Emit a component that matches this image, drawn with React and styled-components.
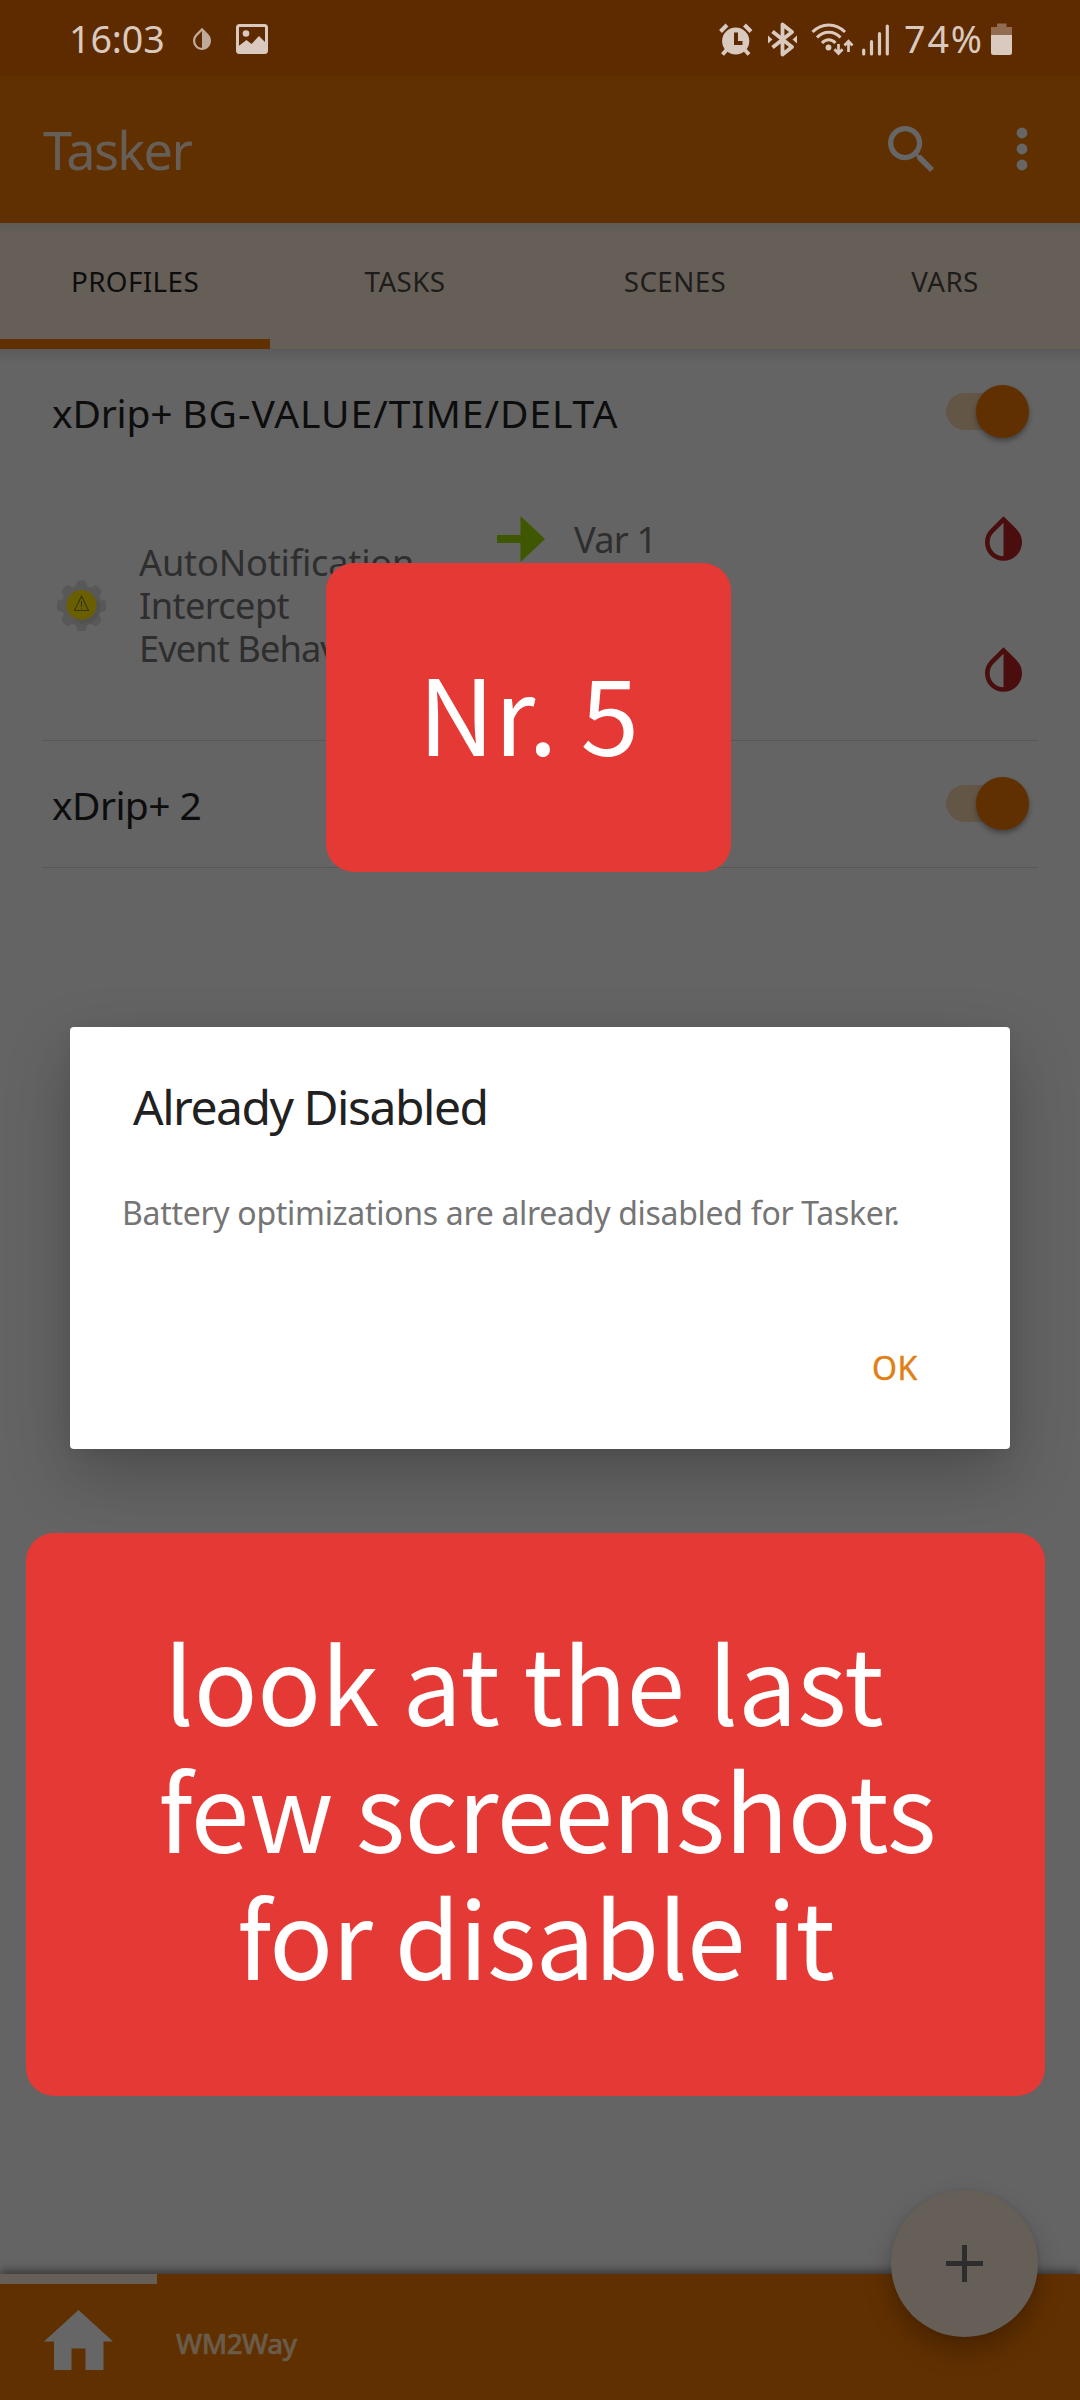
import React from "react";
import styled, { createGlobalStyle } from "styled-components";

const color = {
  status: "#5e2a00",
  bar: "#613000",
  cream: "#665f58",
  surface: "#646464",
  divider: "#575757",
  onBar: "#665f58",
  icon: "#666666",
  title: "#0d0d0d",
  secondary: "#2e2e2e",
  statusFg: "#d9c9be",
  red: "#e53935",
};

const Global = createGlobalStyle`
  * { box-sizing: border-box; }
  body { margin: 0; background: ${color.surface}; font-family: "Noto Sans", "Open Sans", sans-serif; }
  svg { display: block; flex: none; }
`;

const Screen = styled.div`
  position: relative;
  display: flex;
  flex-direction: column;
  width: 1080px;
  height: 2400px;
  overflow: hidden;
  background: ${color.surface};
`;

/* Status bar */
const StatusBar = styled.header`
  display: flex;
  align-items: center;
  justify-content: space-between;
  height: 76px;
  padding: 2px 68px 0 69px;
  background: ${color.status};
  color: ${color.statusFg};
`;
const StatusGroup = styled.div`
  display: flex;
  align-items: center;
`;
const StatusText = styled.span`
  font-size: 37.6px;
  line-height: 50px;
  letter-spacing: ${(p) => p.$spacing}px;
  margin-right: ${(p) => p.$gap}px;
  white-space: nowrap;
`;
const StatusIcon = styled.svg`
  height: 36px;
  width: ${(p) => p.$width}px;
  margin-right: ${(p) => p.$gap || 0}px;
  opacity: ${(p) => (p.$dim ? 0.8 : 1)};
`;

/* Toolbar */
const Toolbar = styled.div`
  display: flex;
  align-items: center;
  height: 147px;
  padding: 0 52px 0 43px;
  background: ${color.bar};
`;
const AppTitle = styled.h1`
  flex: 1;
  margin: 0;
  font-size: 52.2px;
  line-height: 70px;
  font-weight: 400;
  letter-spacing: -1.6px;
  color: ${color.onBar};
`;
const ToolbarActions = styled.div`
  display: flex;
  align-items: center;
  gap: 82px;
  padding-bottom: 2px;
  color: ${color.icon};
`;

/* Tabs */
const Tabs = styled.nav`
  display: grid;
  grid-template-columns: repeat(4, 1fr);
  height: 126px;
  background: linear-gradient(#5f5a54, ${color.cream} 12px);
`;
const Tab = styled.div`
  display: flex;
  align-items: center;
  justify-content: center;
  border-bottom: 10px solid ${(p) => (p.$active ? color.bar : "transparent")};
  font-size: 27.8px;
  letter-spacing: 0.4px;
  color: ${(p) => (p.$active ? color.title : "#1f1d1b")};
`;

/* Profile list */
const List = styled.main`
  flex: 1;
  background: linear-gradient(#595a59, ${color.surface} 14px);
`;
const Profile = styled.section`
  margin: 0 42px;
  padding-bottom: ${(p) => p.$pad}px;
  border-bottom: 1px solid ${color.divider};
`;
const ProfileHeader = styled.div`
  display: flex;
  align-items: center;
  justify-content: space-between;
  height: 125px;
  padding: 0 9px 0 10px;
`;
const ProfileName = styled.h2`
  margin: 2px 0 0;
  font-size: 39px;
  line-height: 52px;
  font-weight: 400;
  letter-spacing: ${(p) => p.$spacing}px;
  color: ${color.title};
  white-space: nowrap;
`;
const NameTail = styled.span`
  letter-spacing: 0.95px;
`;
const Track = styled.div`
  display: flex;
  align-items: center;
  justify-content: flex-end;
  width: 83px;
  height: 37px;
  border-radius: 19px;
  background: linear-gradient(90deg, #645646 60px, transparent 60px);
`;
const Thumb = styled.div`
  width: 53px;
  height: 53px;
  flex: none;
  border-radius: 50%;
  background: ${color.bar};
  box-shadow: 0 3px 5px rgba(0, 0, 0, 0.35);
`;
const ProfileBody = styled.div`
  display: grid;
  grid-template-columns: 441px 1fr auto;
  height: 262px;
  padding: 0 16px 0 14px;
`;
const Context = styled.div`
  display: flex;
  align-items: center;
  gap: 32px;
`;
const ContextText = styled.p`
  margin: 0;
  font-size: 36.2px;
  line-height: 43px;
  color: ${color.secondary};
`;
const ContextLine = styled.span`
  display: block;
  letter-spacing: ${(p) => p.$spacing}px;
`;
const Column = styled.div`
  display: grid;
  grid-template-rows: 131px 131px;
  align-items: center;
  padding-bottom: 2px;
  margin-top: -1px;
`;
const Action = styled.div`
  display: flex;
  align-items: center;
  gap: 29px;
  font-size: 36.2px;
  letter-spacing: -0.8px;
  color: ${color.secondary};
`;

/* Dialog */
const Dialog = styled.div`
  position: absolute;
  left: 70px;
  top: 1027px;
  width: 940px;
  height: 422px;
  padding: 47px 51px 0 52px;
  border-radius: 4px;
  background: #fff;
  box-shadow: 0 26px 66px rgba(0, 0, 0, 0.23), 0 4px 16px rgba(0, 0, 0, 0.06);
`;
const DialogTitle = styled.h3`
  margin: 0 0 52px 11px;
  font-size: 48px;
  line-height: 65px;
  font-weight: 400;
  letter-spacing: -1.48px;
  color: #212121;
`;
const DialogText = styled.p`
  margin: 0;
  font-size: 32px;
  line-height: 44px;
  letter-spacing: -0.3px;
  color: #757575;
  white-space: nowrap;
`;
const DialogButton = styled.button`
  display: block;
  margin: 111px 41px 0 auto;
  padding: 0;
  border: 0;
  background: none;
  font: 400 32px/44px "Noto Sans", sans-serif;
  letter-spacing: 0.6px;
  color: #e07f14;
  -webkit-text-stroke: 0.4px #e07f14;
`;

/* Red notes laid over the screen */
const Note = styled.div`
  position: absolute;
  left: ${(p) => p.$x}px;
  top: ${(p) => p.$y}px;
  width: ${(p) => p.$w}px;
  height: ${(p) => p.$h}px;
  display: flex;
  flex-direction: column;
  align-items: center;
  justify-content: center;
  padding-bottom: 14px;
  border-radius: 28px;
  background: ${color.red};
  color: #fff;
  font-family: "Noto Sans CJK JP", "Noto Sans", sans-serif;
  font-size: 105.5px;
  line-height: 127px;
`;
const NoteLine = styled.span`
  white-space: pre;
  letter-spacing: ${(p) => p.$spacing || 0}px;
`;

/* Bottom bar */
const BottomBar = styled.footer`
  display: flex;
  height: 126px;
  background: ${color.bar};
  box-shadow: 0 -4px 8px rgba(0, 0, 0, 0.4);
`;
const HomeTab = styled.div`
  display: flex;
  justify-content: center;
  width: 157px;
  padding-top: 26px;
  border-top: 10px solid ${color.cream};
  color: ${color.icon};
`;
const ProjectTab = styled.div`
  display: flex;
  align-items: center;
  padding: 11px 0 0 19px;
  font-size: 27.8px;
  font-weight: 500;
  letter-spacing: -0.5px;
  color: #6a5c4a;
  -webkit-text-stroke: 0.6px #6a5c4a;
`;
const Fab = styled.button`
  position: absolute;
  left: 891px;
  top: 2190px;
  width: 147px;
  height: 147px;
  display: flex;
  align-items: center;
  justify-content: center;
  padding: 0;
  border: 0;
  border-radius: 50%;
  background: ${color.cream};
  color: #2d2d2d;
  box-shadow: 0 14px 26px rgba(0, 0, 0, 0.25), 0 0 5px rgba(0, 0, 0, 0.08);
`;

const dropPath =
  "M17.66 7.93 12 2.27 6.34 7.93c-3.12 3.12-3.12 8.19 0 11.31C7.9 20.8 9.95 21.58 12 21.58s4.1-.78 5.66-2.34c3.12-3.12 3.12-8.19 0-11.31zM12 19.59c-1.6 0-3.11-.62-4.24-1.76C6.62 16.69 6 15.19 6 13.59s.62-3.11 1.76-4.24L12 5.1v14.49z";

const Drop = () => (
  <svg width="37" height="45" viewBox="4 2.27 16 19.31" fill="#4a0e0e">
    <path d={dropPath} />
  </svg>
);

const gearPath = (() => {
  const pts = [];
  for (let i = 0; i < 8; i++) {
    const a = (i * Math.PI) / 4;
    [[-0.27, 18.5], [-0.13, 23.5], [0.13, 23.5], [0.27, 18.5]].forEach(([d, r]) => {
      pts.push(`${(25.5 + r * Math.sin(a + d)).toFixed(2)} ${(26 - r * Math.cos(a + d)).toFixed(2)}`);
    });
  }
  return `M${pts.join("L")}Z`;
})();

const Gear = () => (
  <svg width="51" height="53" viewBox="0 0 51 53">
    <path d={gearPath} transform="translate(0 1.500)" fill="#4e4e4e" stroke="#4e4e4e" strokeWidth="2" strokeLinejoin="round" opacity=".6" />
    <path d={gearPath} fill="#585858" stroke="#585858" strokeWidth="2.4" strokeLinejoin="round" />
    <path d="M36 16l9 9-4 14-6 4-10 2-10-9z" fill="#4c4c4c" opacity=".5" />
    <circle cx="25.5" cy="26" r="15" fill="#6a5f00" />
    <path d="M25.500 17l7 14.500h-14zM25.500 22v5.500M25.500 28.800v1" fill="none" stroke="#39340a" strokeWidth="1.100" strokeLinejoin="round" />
  </svg>
);

const Switch = () => (
  <Track>
    <Thumb />
  </Track>
);

const tabs = ["PROFILES", "TASKS", "SCENES", "VARS"];

export default function App() {
  return (
    <Screen>
      <Global />
      <StatusBar>
        <StatusGroup>
          <StatusText $spacing={-0.1} $gap={28}>16:03</StatusText>
          <StatusIcon $width={18} $gap={25} $dim viewBox="0 0 18 36" fill="currentColor">
            <g transform="translate(0 6.7) scale(1.125 1.155) translate(-4 -2.27)">
              <path d={dropPath} />
            </g>
          </StatusIcon>
          <StatusIcon $width={32} viewBox="0 0 32 36">
            <rect x="1.5" y="4.5" width="29" height="27" rx="2" fill="none" stroke="currentColor" strokeWidth="3" />
            <circle cx="10" cy="12.5" r="3.3" fill="currentColor" />
            <path d="M2 25.500l8.500-6.500 5 4 7.500-8 7.500 7.500V31H2z" fill="currentColor" />
          </StatusIcon>
        </StatusGroup>
        <StatusGroup>
          <StatusIcon $width={34} $gap={15} viewBox="0 0 34 36">
            <circle cx="16.7" cy="20" r="13.6" fill="currentColor" />
            <path d="M1.500 10.500l6.500-6.500M32 10.500L25.500 4" stroke="currentColor" strokeWidth="4" />
            <path d="M7.500 29L3.500 33.500M26 29l4 4.500" stroke="currentColor" strokeWidth="4" />
            <path d="M17 11.500v10.500h6.500" fill="none" stroke={color.status} strokeWidth="4" />
          </StatusIcon>
          <StatusIcon $width={29} $gap={14} viewBox="0 0 29 36">
            <path d="M4.500 10.500L24 26l-9.500 7.500v-30L24 11 4.500 26.500" fill="none" stroke="currentColor" strokeWidth="3.8" strokeLinejoin="round" />
            <path d="M0 14.500l4.500 4L0 22.500zM29 14.500l-4.500 4 4.500 4z" fill="currentColor" />
          </StatusIcon>
          <StatusIcon $width={43} $gap={8} viewBox="0 0 43 36">
            <g fill="none" stroke="currentColor" strokeWidth="3">
              <path d="M1.500 11C10.500 1.500 25 1.500 34 11" />
              <path d="M6 16.500c6.500-7 17-7 23.500 0" />
              <path d="M11 22c4-4.200 9.500-4.200 13.500 0" />
              <path d="M27.500 23v9M23.500 28.300l4 4.200 4-4.200M37.500 31v-9.500M33.500 24.500l4-4.200 4 4.200" strokeWidth="2.7" />
            </g>
            <circle cx="17.500" cy="26.500" r="2.9" fill="currentColor" />
          </StatusIcon>
          <StatusIcon $width={27} $gap={15} viewBox="0 0 27 36">
            <path d="M1.700 29v4M9.500 20.500V33M17.500 12.500V33M25.300 5v28" stroke="currentColor" strokeWidth="3.200" strokeLinecap="round" />
          </StatusIcon>
          <StatusText $spacing={1.9} $gap={7}>74%</StatusText>
          <StatusIcon $width={21} viewBox="0 0 21 36" fill="currentColor">
            <path d="M6 5V1.500h9.500V5H21v9H0V5z" opacity=".42" transform="translate(0 1)" />
            <path d="M0 14h21v17.500a2.500 2.500 0 0 1-2.500 2.500h-16A2.500 2.500 0 0 1 0 31.500z" />
          </StatusIcon>
        </StatusGroup>
      </StatusBar>

      <Toolbar>
        <AppTitle>Tasker</AppTitle>
        <ToolbarActions>
          <svg width="46" height="46" viewBox="3 3 17.490 17.490" fill="currentColor">
            <path d="M15.500 14h-.79l-.28-.27A6.471 6.471 0 0 0 16 9.500 6.500 6.500 0 1 0 9.500 16c1.610 0 3.090-.59 4.230-1.570l.27.28v.79l5 4.990L20.490 19l-4.990-5zm-6 0C7.010 14 5 11.990 5 9.500S7.010 5 9.500 5 14 7.010 14 9.500 11.990 14 9.500 14z" />
          </svg>
          <svg width="12" height="44" viewBox="0 0 12 44" fill="currentColor">
            <circle cx="6" cy="6" r="5.400" />
            <circle cx="6" cy="22" r="5.400" />
            <circle cx="6" cy="38" r="5.400" />
          </svg>
        </ToolbarActions>
      </Toolbar>

      <Tabs>
        {tabs.map((name, i) => (
          <Tab key={name} $active={i === 0}>{name}</Tab>
        ))}
      </Tabs>

      <List>
        <Profile $pad={4}>
          <ProfileHeader>
            <ProfileName $spacing={-0.2}>
              xDrip+ <NameTail>BG-VALUE/TIME/DELTA</NameTail>
            </ProfileName>
            <Switch />
          </ProfileHeader>
          <ProfileBody>
            <Context>
              <Gear />
              <ContextText>
                <ContextLine $spacing={-0.2}>AutoNotification</ContextLine>
                <ContextLine $spacing={-0.6}>Intercept</ContextLine>
                <ContextLine $spacing={-0.9}>Event Behavior</ContextLine>
              </ContextText>
            </Context>
            <Column>
              <Action>
                <svg width="48" height="46" viewBox="0 0 48 46" fill="#3f5700">
                  <path d="M0 19h23.500V0L48 23 23.500 46V27H0z" />
                </svg>
                Var 1
              </Action>
            </Column>
            <Column>
              <Drop />
              <Drop />
            </Column>
          </ProfileBody>
        </Profile>
        <Profile $pad={1}>
          <ProfileHeader>
            <ProfileName $spacing={-0.6}>xDrip+ 2</ProfileName>
            <Switch />
          </ProfileHeader>
        </Profile>
      </List>

      <BottomBar>
        <HomeTab>
          <svg width="69" height="60" viewBox="0 0 69 60" fill="currentColor">
            <path d="M34.500 0L69 31.500h-9.500V60H41.500V38.500h-14V60H10V31.500H0z" />
          </svg>
        </HomeTab>
        <ProjectTab>WM2Way</ProjectTab>
      </BottomBar>

      <Fab>
        <svg width="37" height="37" viewBox="0 0 37 37">
          <path d="M18.500 0v37M0 18.500h37" stroke="currentColor" strokeWidth="5" />
        </svg>
      </Fab>

      <Dialog>
        <DialogTitle>Already Disabled</DialogTitle>
        <DialogText>Battery optimizations are already disabled for Tasker.</DialogText>
        <DialogButton>OK</DialogButton>
      </Dialog>

      <Note $x={326} $y={563} $w={405} $h={309}>
        <NoteLine $spacing={-0.3}>Nr. 5</NoteLine>
      </Note>
      <Note $x={26} $y={1533} $w={1019} $h={563}>
        <NoteLine $spacing={-0.2}>{"look at the last "}</NoteLine>
        <NoteLine $spacing={-0.7}>{" few screenshots"}</NoteLine>
        <NoteLine $spacing={-1}>for disable it</NoteLine>
      </Note>
    </Screen>
  );
}
